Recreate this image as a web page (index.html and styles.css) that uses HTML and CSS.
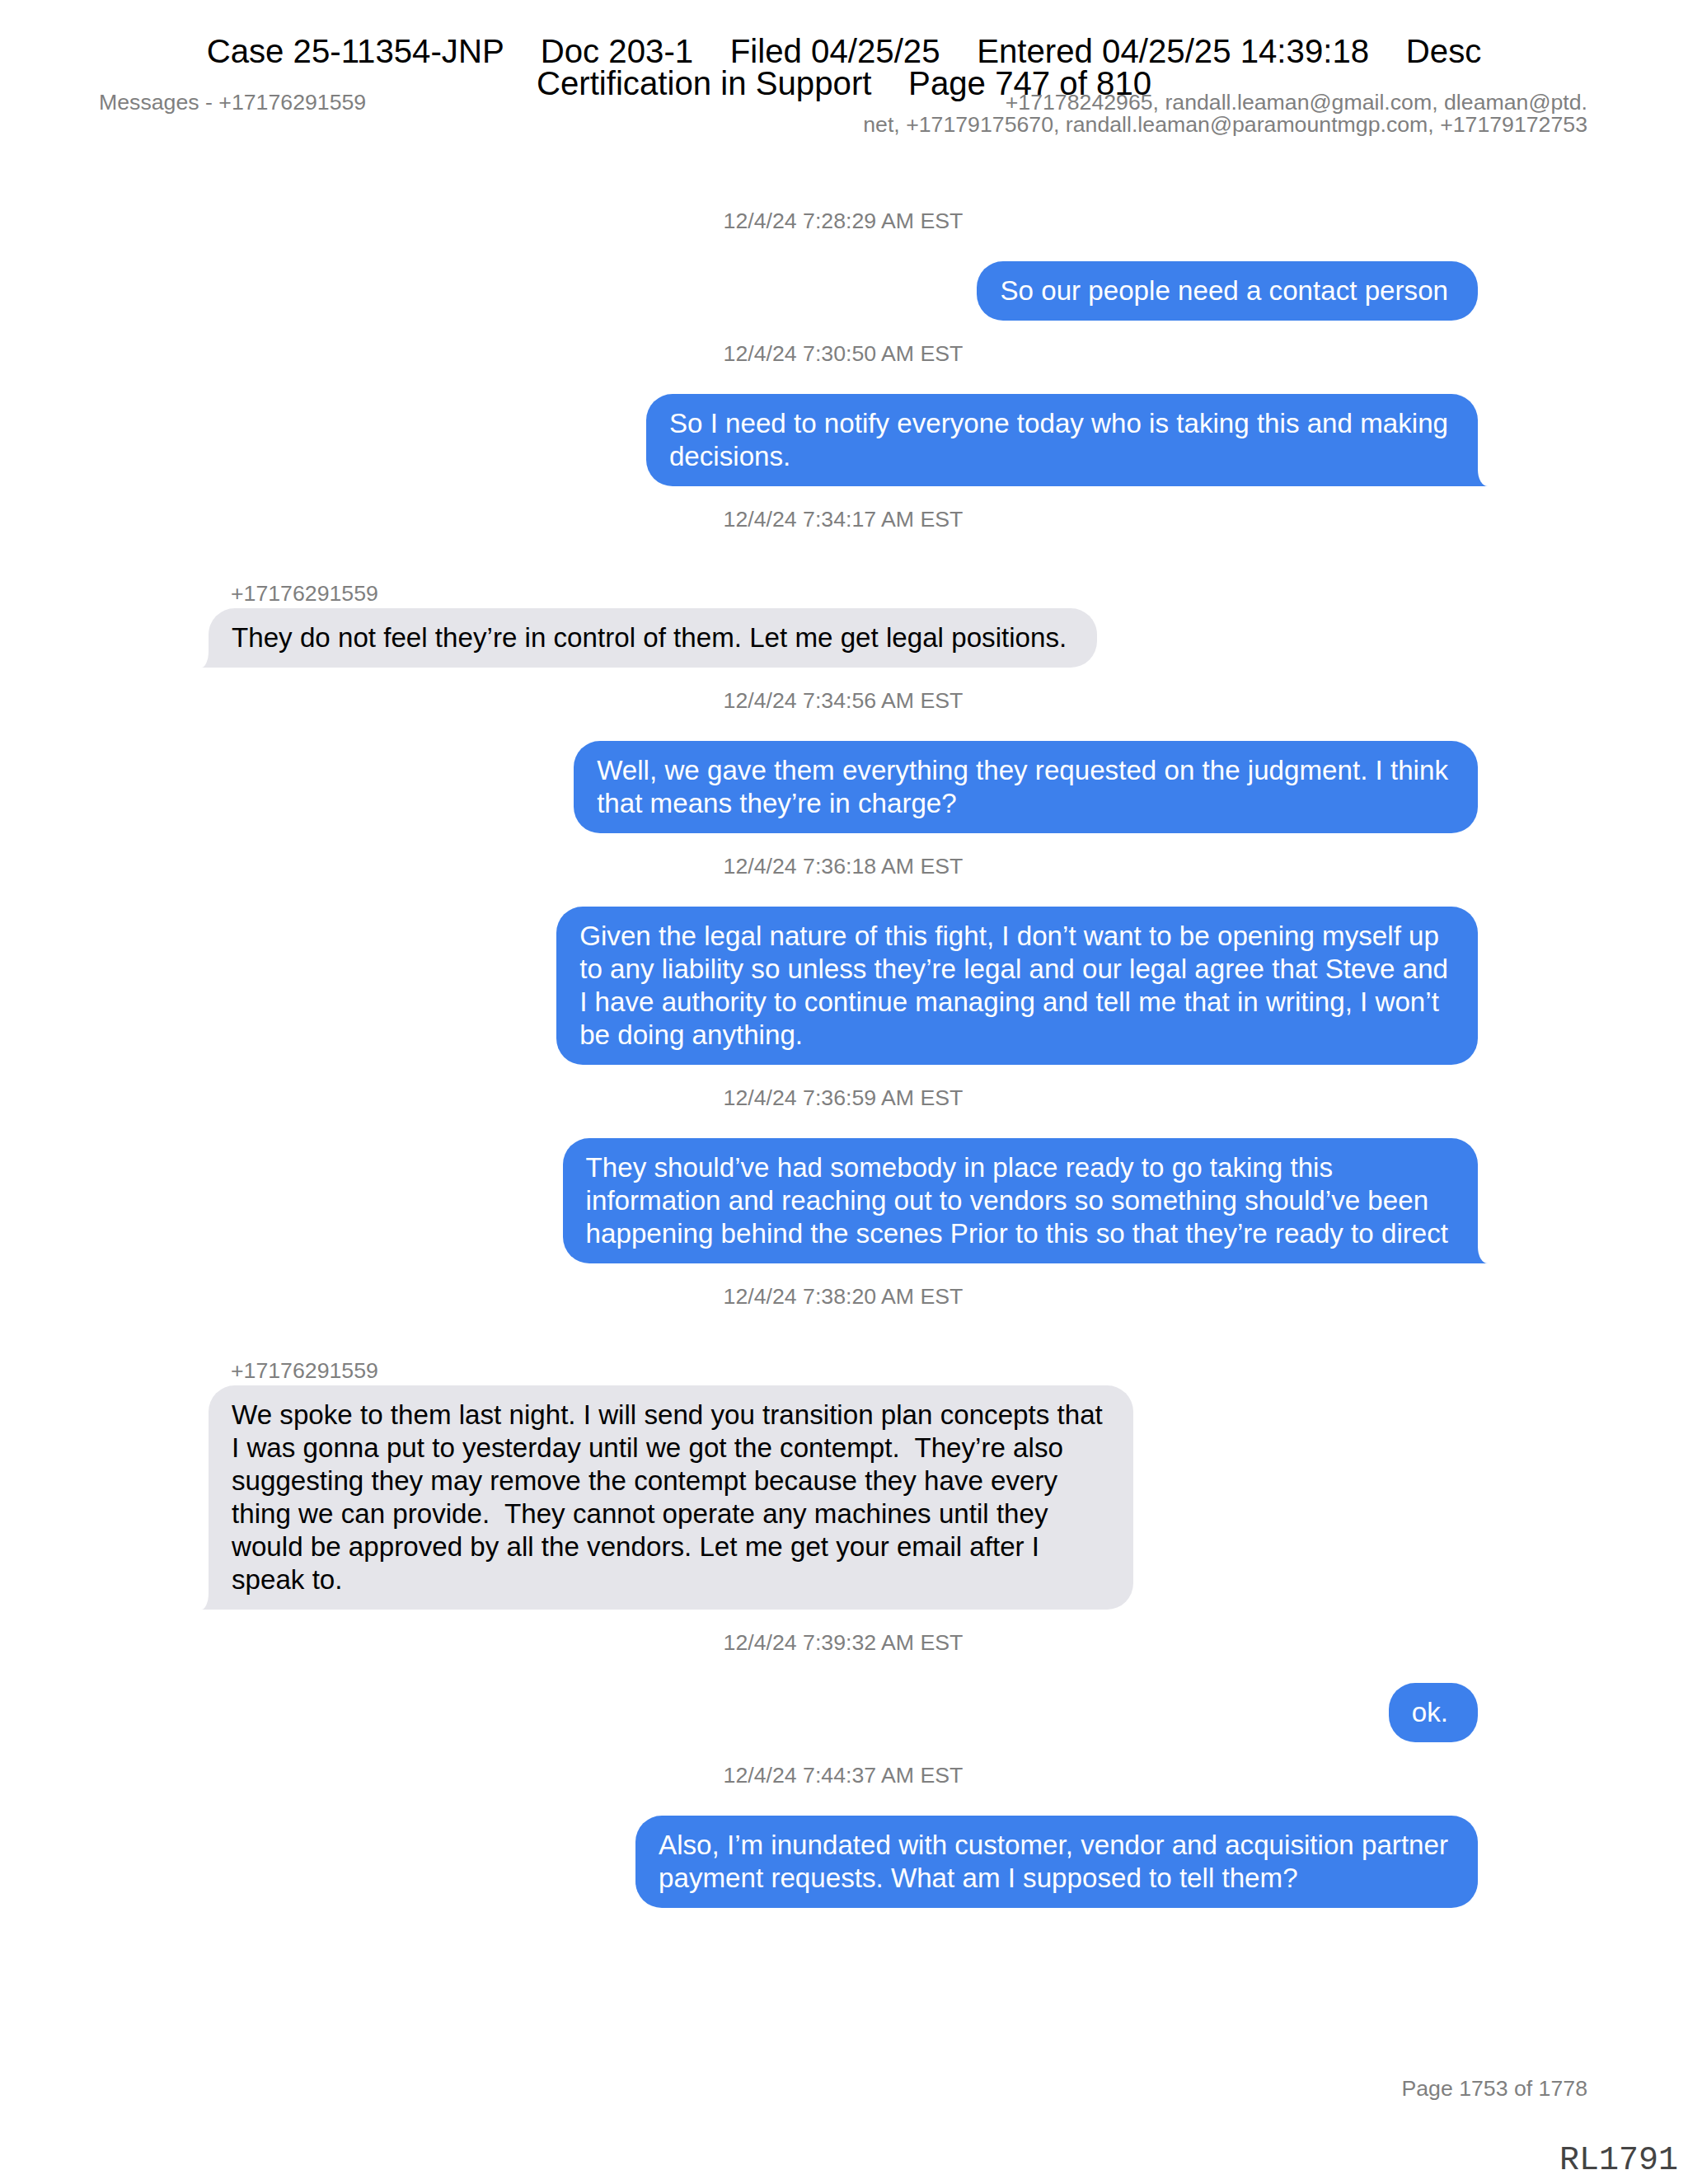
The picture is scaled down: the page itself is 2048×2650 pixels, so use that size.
FILE: index.html
```html
<!DOCTYPE html>
<html lang="en">
<head>
<meta charset="utf-8">
<title>Messages - +17176291559</title>
<link rel="stylesheet" href="styles.css">
</head>
<body>
<div class="page">
  <div class="stamp">Case 25-11354-JNP    Doc 203-1    Filed 04/25/25    Entered 04/25/25 14:39:18    Desc<br>Certification in Support    Page 747 of 810</div>

  <header class="page-head">
    <div class="head-left">Messages - +17176291559</div>
    <div class="head-right">+17178242965, randall.leaman@gmail.com, dleaman@ptd.<br>net, +17179175670, randall.leaman@paramountmgp.com, +17179172753</div>
  </header>

  <main class="thread">
    <div class="ts first">12/4/24 7:28:29 AM EST</div>
    <div class="bubble out">So our people need a contact person</div>

    <div class="ts">12/4/24 7:30:50 AM EST</div>
    <div class="bubble out tail">So I need to notify everyone today who is taking this and making<br>decisions.</div>

    <div class="ts">12/4/24 7:34:17 AM EST</div>
    <div class="incoming">
      <div class="sender">+17176291559</div>
      <div class="bubble in tail">They do not feel they’re in control of them. Let me get legal positions.</div>
    </div>

    <div class="ts">12/4/24 7:34:56 AM EST</div>
    <div class="bubble out">Well, we gave them everything they requested on the judgment. I think<br>that means they’re in charge?</div>

    <div class="ts">12/4/24 7:36:18 AM EST</div>
    <div class="bubble out">Given the legal nature of this fight, I don’t want to be opening myself up<br>to any liability so unless they’re legal and our legal agree that Steve and<br>I have authority to continue managing and tell me that in writing, I won’t<br>be doing anything.</div>

    <div class="ts">12/4/24 7:36:59 AM EST</div>
    <div class="bubble out tail">They should’ve had somebody in place ready to go taking this<br>information and reaching out to vendors so something should’ve been<br>happening behind the scenes Prior to this so that they’re ready to direct</div>

    <div class="ts">12/4/24 7:38:20 AM EST</div>
    <div class="incoming">
      <div class="sender">+17176291559</div>
      <div class="bubble in tail">We spoke to them last night. I will send you transition plan concepts that<br>I was gonna put to yesterday until we got the contempt.  They’re also<br>suggesting they may remove the contempt because they have every<br>thing we can provide.  They cannot operate any machines until they<br>would be approved by all the vendors. Let me get your email after I<br>speak to.</div>
    </div>

    <div class="ts">12/4/24 7:39:32 AM EST</div>
    <div class="bubble out">ok.</div>

    <div class="ts">12/4/24 7:44:37 AM EST</div>
    <div class="bubble out">Also, I’m inundated with customer, vendor and acquisition partner<br>payment requests. What am I supposed to tell them?</div>
  </main>

  <footer class="page-foot">
    <div class="page-no">Page 1753 of 1778</div>
    <div class="bates">RL1791</div>
  </footer>
</div>
</body>
</html>
```

FILE: styles.css
```css
html, body {
  margin: 0;
  padding: 0;
  background: #ffffff;
}

.page {
  position: relative;
  width: 2048px;
  min-height: 2650px;
  font-family: "Liberation Sans", Arial, sans-serif;
  color: #000;
}

/* court filing stamp laid over the page header */
.stamp {
  position: absolute;
  top: 43px;
  left: 0;
  right: 0;
  text-align: center;
  font-size: 40.2px;
  line-height: 39px;
  white-space: pre;
  color: #000;
}

.page-head {
  display: flex;
  justify-content: space-between;
  align-items: flex-start;
  padding: 111px 122px 0 120px;
  font-size: 26.7px;
  line-height: 27px;
  color: #7f7f7f;
}

.head-right {
  text-align: right;
}

.thread {
  display: flex;
  flex-direction: column;
  margin-top: 87px;
  padding: 0 255px 0 253px;
}

.ts {
  align-self: center;
  font-size: 26.7px;
  line-height: 32px;
  color: #7f7f7f;
  margin: 24px 0 33px;
}

.ts.first {
  margin-top: 0;
}

.incoming {
  align-self: flex-start;
  display: flex;
  flex-direction: column;
  align-items: flex-start;
  margin-top: 25px;
}

.sender {
  font-size: 26.7px;
  line-height: 32px;
  color: #7f7f7f;
  margin: 0 0 2px 27px;
}

.bubble {
  position: relative;
  font-size: 33.15px;
  line-height: 40px;
  padding: 16px 30px;
  border-radius: 32px;
  white-space: pre;
}

.bubble.out {
  align-self: flex-end;
  background: #3d80ec;
  color: #ffffff;
  padding-left: 28px;
  padding-right: 36px;
}

.bubble.in {
  background: #e5e5ea;
  color: #000000;
  padding-left: 28px;
  padding-right: 37px;
}

/* tails */
.bubble.out.tail {
  border-bottom-right-radius: 0;
}

.bubble.out.tail::before,
.bubble.out.tail::after {
  content: "";
  position: absolute;
  bottom: 0;
  right: -12px;
  width: 12px;
  height: 20px;
}

.bubble.out.tail::before {
  background: #3d80ec;
}

.bubble.out.tail::after {
  background: #ffffff;
  border-bottom-left-radius: 12px 20px;
}

.bubble.in.tail {
  border-bottom-left-radius: 0;
}

.bubble.in.tail::before,
.bubble.in.tail::after {
  content: "";
  position: absolute;
  bottom: 0;
  left: -9px;
  width: 9px;
  height: 20px;
}

.bubble.in.tail::before {
  background: #e5e5ea;
}

.bubble.in.tail::after {
  background: #ffffff;
  border-bottom-right-radius: 9px 20px;
}

.page-foot {
  display: flex;
  flex-direction: column;
  align-items: flex-end;
  margin-top: 203px;
}

.page-no {
  font-size: 26.7px;
  line-height: 32px;
  color: #7f7f7f;
  padding-right: 122px;
}

.bates {
  margin-top: 52px;
  font-family: "Liberation Mono", "Courier New", monospace;
  font-size: 40px;
  line-height: 40px;
  color: #444444;
  padding-right: 12px;
}
```
